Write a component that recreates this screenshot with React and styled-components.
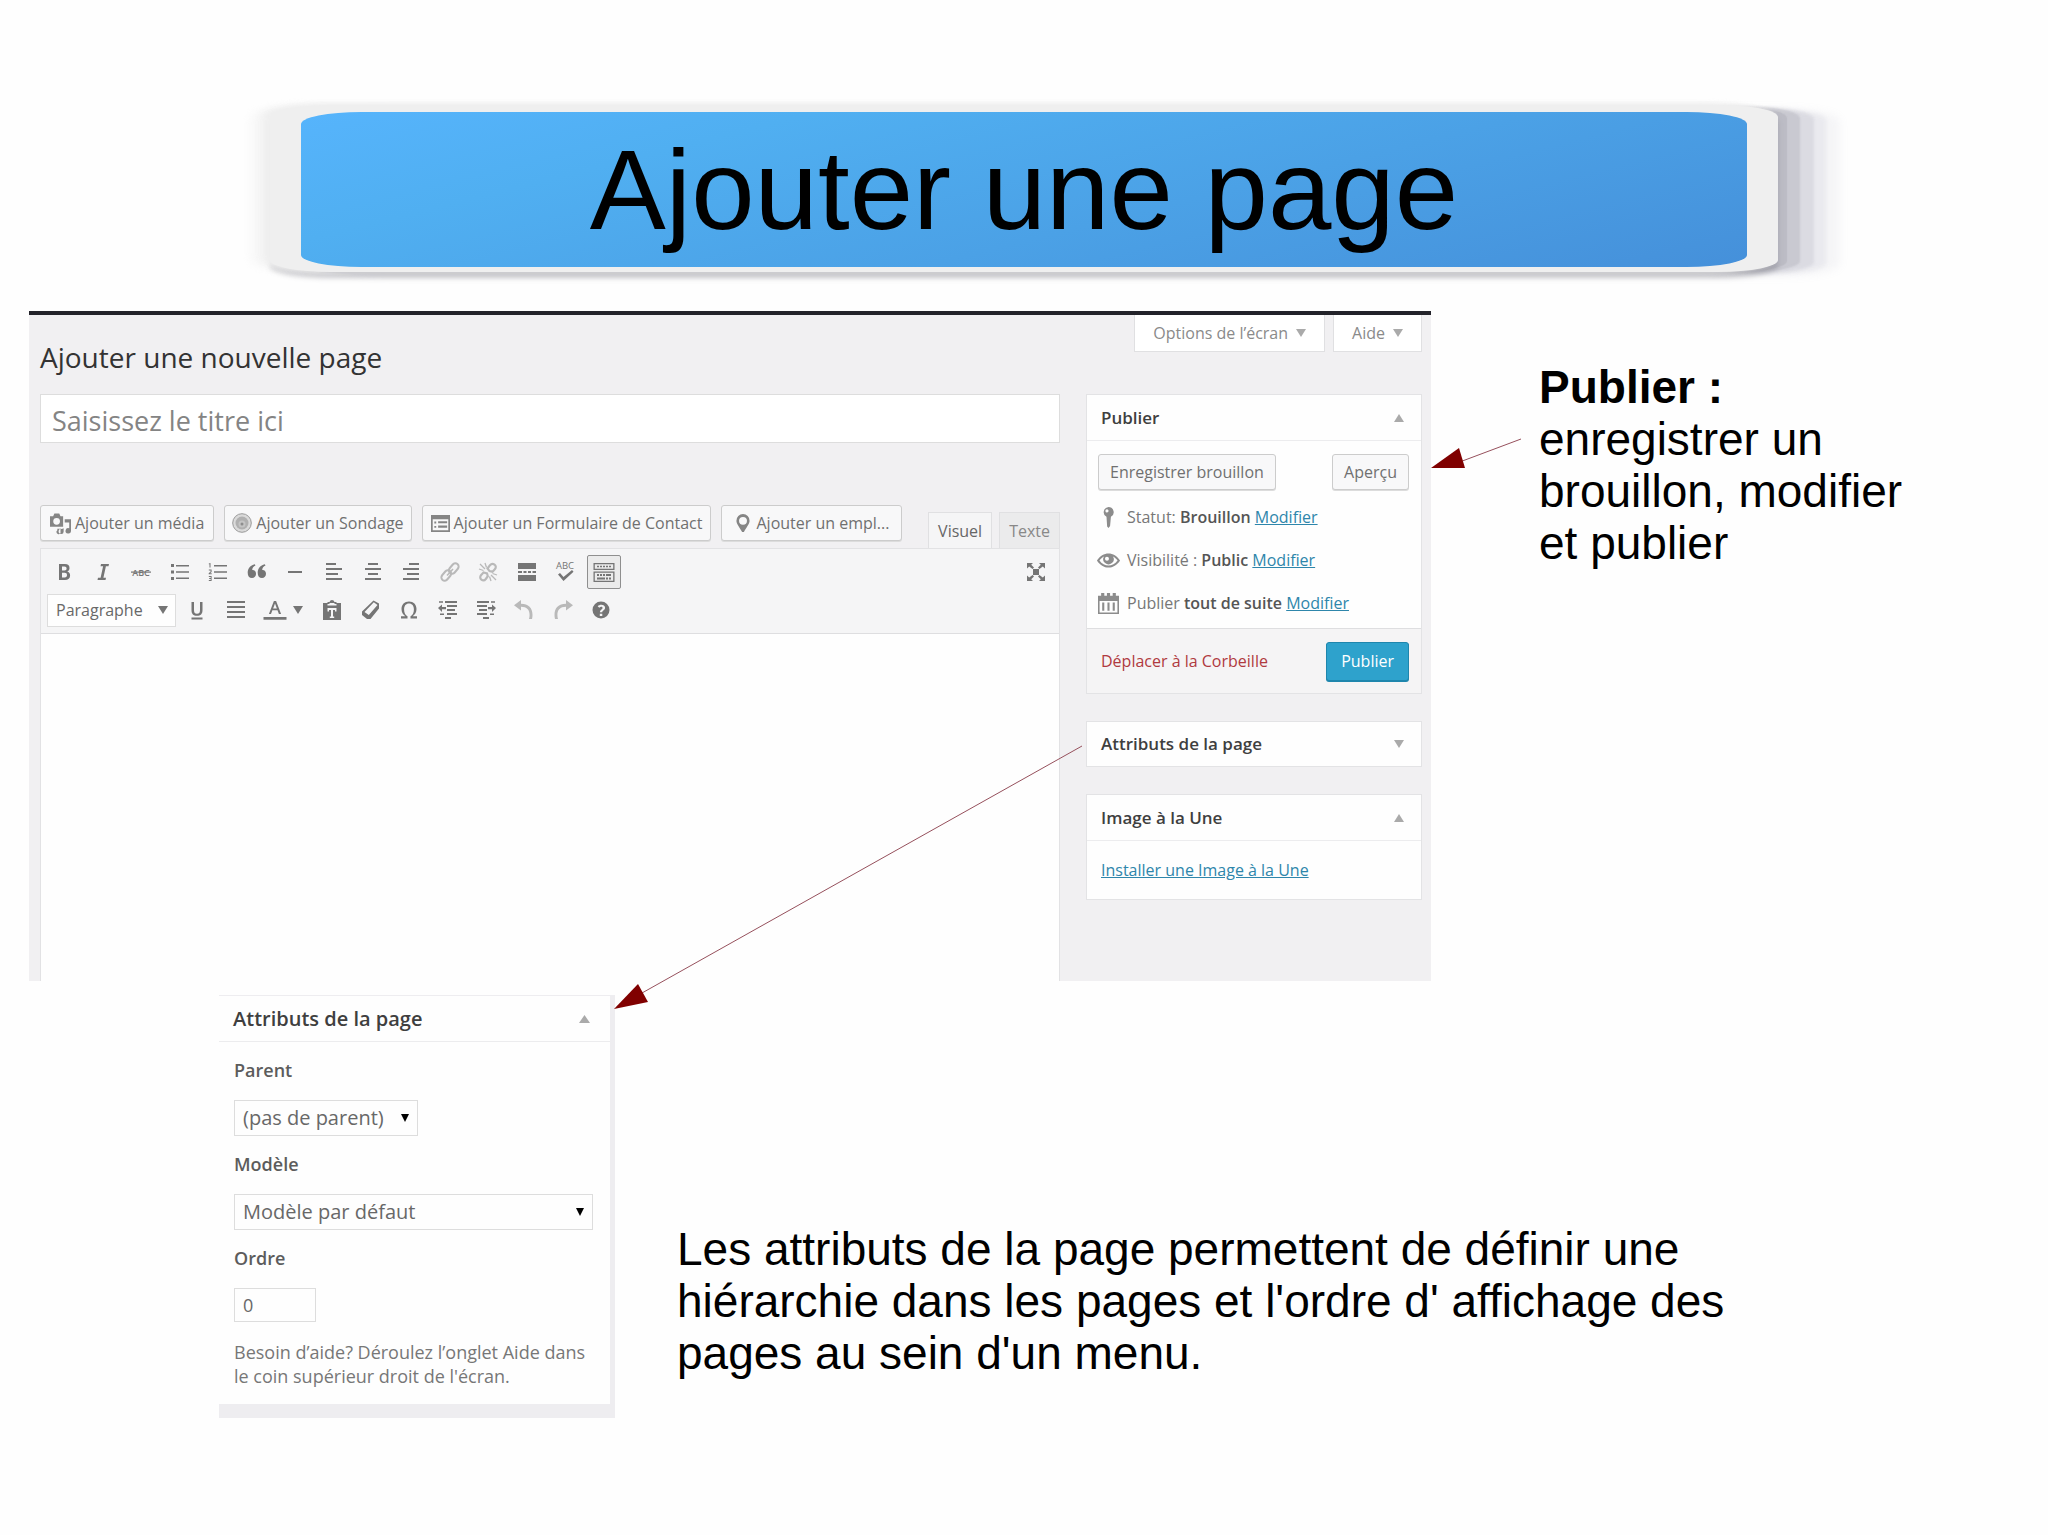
import React from "react";
import styled, { createGlobalStyle, css } from "styled-components";

const Global = createGlobalStyle`
  *, *::before, *::after { box-sizing: border-box; }
  body { margin: 0; background: #fefefe; }
  h1, h2, h3, p { margin: 0; font-weight: 400; }
  button, input, select, textarea { font: inherit; color: inherit; margin: 0; }
`;

const ui = css`
  font-family: "Open Sans", "Noto Sans", sans-serif;
  font-size: 16px;
  line-height: 24px;
  color: #777;
`;

/* ---------- slide ---------- */

const Slide = styled.main`
  position: relative;
  padding: 105px 0 116px;
  font-family: "Liberation Sans", Arial, sans-serif;
  color: #000;
`;

const BannerFrame = styled.header`
  margin: 0 270px;
  padding: 7px 31px 5px;
  background: #efefef;
  border-radius: 60px / 12px;
  box-shadow:
    -4px -1px 4px #efefef,
    -10px -1px 6px rgba(239, 239, 239, 0.6),
    -20px 0 8px rgba(240, 240, 240, 0.4),
    0 6px 5px rgba(140, 140, 148, 0.45),
    9px 1px 1px rgba(160, 160, 168, 0.3),
    22px 1px 2px rgba(160, 160, 168, 0.3),
    36px 2px 3px rgba(170, 170, 180, 0.22),
    48px 3px 4px rgba(170, 170, 190, 0.14),
    62px 4px 8px rgba(170, 170, 190, 0.1);
`;

const Banner = styled.h1`
  height: 155px;
  display: flex;
  align-items: center;
  justify-content: center;
  background: linear-gradient(166deg, #56b4fc 0%, #50aff1 25%, #4ba1e6 60%, #4590da 100%);
  border-radius: 60px / 12px;
  font-size: 114px;
  line-height: 130px;
  white-space: nowrap;
`;

const TopRow = styled.section`
  display: grid;
  grid-template-columns: 1402fr 108fr 509fr;
  margin-top: 39px;
  padding-left: 29px;
`;

const BottomRow = styled.section`
  display: flex;
  align-items: flex-end;
  gap: 62px;
  margin-top: 14px;
  padding-left: 219px;
`;

const Note = styled.p`
  font-size: 46px;
  line-height: 52px;
`;

const SideNote = styled(Note)`
  max-width: 400px;
  padding-top: 50px;
`;

const BottomNote = styled(Note)`
  max-width: 1080px;
  padding-bottom: 39px;
`;

const ShortArrow = styled.svg`
  display: block;
  width: 92px;
  height: 32px;
  margin-top: 126px;
`;

const LongArrow = styled.svg`
  position: absolute;
  left: 612px;
  top: 744px;
  width: 472px;
  height: 268px;
  pointer-events: none;
`;

/* ---------- admin screen ---------- */

const Screen = styled.div`
  ${ui}
  background: #f1f0f2;
  border-top: 4px solid #23232a;
  padding: 0 9px 0 11px;
`;

const ScreenHeader = styled.div`
  display: flex;
  justify-content: space-between;
  align-items: flex-start;
  height: 79px;
`;

const PageTitle = styled.h2`
  padding-top: 23px;
  font-size: 28px;
  line-height: 38px;
  color: #333;
`;

const MetaTabs = styled.div`
  display: flex;
  gap: 8px;
`;

const MetaTab = styled.button`
  ${ui}
  display: flex;
  align-items: center;
  gap: 8px;
  height: 37px;
  padding: 0 18px;
  background: #fff;
  border: 1px solid #e0e0e2;
  border-top: 0;
  color: #8a8a8a;
  svg { color: #aaa; }
`;

const Columns = styled.div`
  display: grid;
  grid-template-columns: 1020fr 336fr;
  column-gap: 26px;
`;

const EditorColumn = styled.div`
  display: flex;
  flex-direction: column;
`;

const TitleInput = styled.input`
  width: 100%;
  height: 49px;
  padding: 3px 11px 0;
  border: 1px solid #ddd;
  background: #fff;
  font-size: 27px;
  color: #777;
  &::placeholder { color: #848484; opacity: 1; }
`;

const EditorTop = styled.div`
  display: flex;
  justify-content: space-between;
  align-items: flex-end;
  margin-top: 62px;
`;

const MediaButtons = styled.div`
  display: flex;
  gap: 10px;
  padding-bottom: 7px;
`;

const Button = styled.button`
  ${ui}
  display: flex;
  align-items: center;
  justify-content: center;
  gap: 4px;
  height: 36px;
  padding: 0 ${(p) => p.$pad || 8}px;
  background: #f8f8f9;
  border: 1px solid #ccc;
  border-radius: 3px;
  box-shadow: 0 1px 0 #dcdcdc;
  color: #707070;
  white-space: nowrap;
  svg { color: #858585; }
`;

const PrimaryButton = styled(Button)`
  height: 39px;
  background: #2ea2cc;
  border-color: #1f86ad;
  box-shadow: 0 1px 0 #1f86ad;
  color: #fff;
`;

const Tabs = styled.div`
  display: flex;
  gap: 7px;
`;

const Tab = styled.button`
  ${ui}
  height: 36px;
  padding: 0 9px;
  margin-bottom: ${(p) => (p.$active ? "-1px" : "0")};
  background: ${(p) => (p.$active ? "#f5f5f6" : "#ebebec")};
  border: 1px solid #e0e0e2;
  border-bottom: 0;
  color: ${(p) => (p.$active ? "#666" : "#888")};
`;

const Editor = styled.div`
  flex: 1;
  display: flex;
  flex-direction: column;
  border: 1px solid #e2e2e4;
  border-bottom: 0;
  background: #fefefe;
`;

const Toolbar = styled.div`
  padding: 6px;
  display: flex;
  flex-direction: column;
  gap: 4px;
  background: #f5f5f6;
  border-bottom: 1px solid #dedee0;
`;

const ToolLine = styled.div`
  display: flex;
  justify-content: space-between;
`;

const ToolRow = styled.div`
  display: flex;
  align-items: center;
  justify-content: space-between;
  height: 34px;
  width: ${(p) => p.$width}px;
`;

const Tool = styled.button`
  display: flex;
  align-items: center;
  justify-content: center;
  gap: 8px;
  width: ${(p) => (p.$wide ? 54 : 34)}px;
  height: 34px;
  padding: 0;
  border: 1px solid ${(p) => (p.$on ? "#8f8f8f" : "transparent")};
  border-radius: 2px;
  background: ${(p) => (p.$on ? "#ebebeb" : "none")};
  color: ${(p) => (p.$dim ? "#b9b9b9" : "#757575")};
`;

const Icon = styled.svg`
  display: block;
  flex: none;
  width: ${(p) => p.$size || 22}px;
  height: ${(p) => p.$size || 22}px;
  fill: currentColor;
`;

const EditorArea = styled.textarea`
  flex: 1;
  width: 100%;
  border: 0;
  resize: none;
  background: #fefefe;
`;

/* ---------- boxes ---------- */

const Sidebar = styled.aside`
  display: flex;
  flex-direction: column;
  gap: 27px;
  padding-bottom: 81px;
`;

const Box = styled.section`
  background: #fefefe;
  border: 1px solid #e3e3e5;
`;

const BoxHead = styled.div`
  display: flex;
  align-items: center;
  justify-content: space-between;
  height: ${(p) => (p.$open ? 46 : 44)}px;
  padding: 0 ${(p) => p.$inset || 17}px 0 14px;
  border-bottom: ${(p) => (p.$open ? "1px solid #ececee" : "0")};
`;

const BoxTitle = styled.h3`
  font-size: ${(p) => p.$size || 17}px;
  font-weight: 600;
  color: #3f3f3f;
`;

const Toggle = styled.button`
  display: flex;
  padding: 0;
  border: 0;
  background: none;
  color: #aaa;
`;

const PublishBody = styled.div`
  padding: 13px 12px 13px 11px;
`;

const Between = styled.div`
  display: flex;
  justify-content: space-between;
  align-items: center;
`;

const InfoList = styled.ul`
  display: grid;
  gap: 19px;
  margin: 15px 0 0;
  padding: 0;
  list-style: none;
`;

const InfoItem = styled.li`
  display: flex;
  align-items: center;
  gap: 8px;
  color: #777;
  svg { color: #8c8c8c; }
  strong { font-weight: 600; color: #555; }
`;

const Link = styled.a`
  color: ${(p) => (p.$danger ? "#b03a40" : "#2e86ab")};
  text-decoration: ${(p) => (p.$danger ? "none" : "underline")};
`;

const PublishFoot = styled(Between)`
  height: 65px;
  padding: 0 12px 0 14px;
  background: #f5f4f5;
  border-top: 1px solid #dedee0;
`;

const BoxBody = styled.div`
  padding: 17px 14px;
`;

/* ---------- page attributes ---------- */

const AttrPanel = styled.form`
  ${ui}
  flex: none;
  width: 396px;
  padding: 1px 5px 14px 0;
  background: #eeedf0;
`;

const AttrInner = styled.div`
  background: #fefefe;
`;

const AttrBody = styled.div`
  display: flex;
  flex-direction: column;
  align-items: flex-start;
  padding: 16px 17px 16px 15px;
`;

const Label = styled.label`
  font-size: 18px;
  font-weight: 600;
  color: #5c5c5c;
  margin-bottom: 18px;
`;

const SelectWrap = styled.div`
  position: relative;
  width: ${(p) => p.$width};
  height: ${(p) => p.$height || 36}px;
  margin-bottom: ${(p) => p.$after || 0}px;
  color: ${(p) => p.$arrow || "#000"};
  svg {
    position: absolute;
    right: ${(p) => p.$inset || 9}px;
    top: 50%;
    margin-top: -4px;
    pointer-events: none;
  }
`;

const Select = styled.select`
  appearance: none;
  width: 100%;
  height: 100%;
  padding: 0 8px;
  border: 1px solid #ddd;
  border-radius: 0;
  background: #fefefe;
  font-size: ${(p) => p.$size}px;
  color: #686868;
`;

const OrderInput = styled.input`
  width: 82px;
  height: 34px;
  padding: 0 8px;
  border: 1px solid #ddd;
  background: #fefefe;
  font-size: 18px;
  color: #686868;
`;

const Help = styled.p`
  margin-top: 18px;
  font-size: 18px;
  line-height: 24px;
  color: #777;
  white-space: nowrap;
`;

/* ---------- drawings ---------- */

const Triangle = ({ up, w = 10, h = 8 }) => (
  <svg width={w} height={h} viewBox="0 0 10 8" preserveAspectRatio="none" fill="currentColor" aria-hidden="true">
    <path d={up ? "M0 8 5 0l5 8z" : "M0 0h10L5 8z"} />
  </svg>
);

const lines = (rows) => rows.map(([x, y, w], i) => <rect key={i} x={x} y={y} width={w} height="2" />);

const GLYPHS = {
  bold: <path fillRule="evenodd" d="M5 2h6c3 0 4.500 1.500 4.500 4 0 1.800-.8 3-2.300 3.600 1.900.5 2.900 1.900 2.900 3.900 0 2.900-1.900 4.500-5.200 4.500H5zm3 2.500v4h2.500c1.400 0 2.100-.7 2.100-2s-.7-2-2.200-2zm0 6.300v4.700h2.700c1.600 0 2.300-.8 2.300-2.400s-.8-2.300-2.400-2.300z" />,
  italic: <path d="M8 2h8l-.5 2.200h-2.600l-2.500 11.600H13l-.5 2.200h-8l.5-2.200h2.600l2.500-11.600H7.500z" />,
  strike: (
    <>
      <text x="10" y="13.500" fontSize="9" fontFamily="Open Sans" fontWeight="600" textAnchor="middle">ABC</text>
      <rect x="0" y="9.500" width="20" height="1.200" />
    </>
  ),
  ul: (
    <>
      <rect x="1" y="2" width="3" height="3" /><rect x="1" y="8.500" width="3" height="3" /><rect x="1" y="15" width="3" height="3" />
      <path d="M6 3h13v1.400H6zM6 9.300h13v1.400H6zM6 15.600h13V17H6z" />
    </>
  ),
  ol: (
    <>
      <path d="M2.500 1v4.500h-1V2.200H.8V1.400zM.8 7.500h2.800V10L2 11.300h1.700v1H.7v-1.100L2.600 9.600V8.400H.8zM.8 14h2.800v5H.8v-.9h1.900v-1.200H1.200v-.8h1.500v-1.200H.8z" />
      <path d="M6 3h13v1.400H6zM6 9.300h13v1.400H6zM6 15.600h13V17H6z" />
    </>
  ),
  quote: <path d="M8.500 3.500C6.400 4.300 5.300 5.900 5.200 8c2-.3 3.800 1.200 3.800 3.800 0 2.400-1.600 4.200-4 4.200-2.700 0-4.300-2-4.300-5.300C.7 6.500 3.300 3.400 7.800 2.300zM18.500 3.500c-2.100.8-3.200 2.400-3.300 4.500 2-.3 3.800 1.200 3.800 3.800 0 2.400-1.600 4.200-4 4.200-2.700 0-4.300-2-4.300-5.300 0-4.200 2.600-7.300 7.100-8.400z" />,
  hr: <rect x="3" y="9" width="14" height="2" />,
  left: lines([[2, 1, 10], [2, 6, 16], [2, 11, 12], [2, 16, 16]]),
  center: lines([[5, 1, 10], [2, 6, 16], [5, 11, 10], [2, 16, 16]]),
  right: lines([[8, 1, 10], [2, 6, 16], [6, 11, 12], [2, 16, 16]]),
  justify: lines([[1, 1, 18], [1, 6, 18], [1, 11, 18], [1, 16, 18]]),
  link: (
    <g fill="none" stroke="currentColor" strokeWidth="2">
      <rect x="8" y="3.200" width="11.500" height="6.600" rx="3.300" transform="rotate(-50 13.750 6.500)" />
      <rect x=".5" y="10.200" width="11.500" height="6.600" rx="3.300" transform="rotate(-50 6.250 13.500)" />
      <path d="M7 13.500 13 7" strokeWidth="1.500" />
    </g>
  ),
  unlink: (
    <g fill="none" stroke="currentColor" strokeWidth="2.200">
      <path d="M9.500 6.500 12 3.200c1.200-1.500 3-1.700 4.500-.6s1.700 3 .5 4.500l-2.500 2.600-3-.6zM5.500 10.500 3 13.200c-1.200 1.500-1 3.300.4 4.400s3.200.9 4.400-.6l2-2.800-.8-2.700z" />
      <path d="M2 2l5 5M7 1l1.500 4.500M1 7l4.500 1.500M18 18l-5-5M13 19l-1.500-4.500M19 13l-4.500-1.500" strokeWidth="1.300" />
    </g>
  ),
  more: <path d="M1 1h18v6H1zM1 9h4v2H1zM6.500 9h3v2h-3zM11 9h3v2h-3zM15.500 9H19v2h-3.500zM1 13h18v6H1z" />,
  spell: (
    <>
      <text x="10" y="7" fontSize="9.500" fontFamily="Open Sans" textAnchor="middle">ABC</text>
      <path d="M3 12.500 5 11l3.500 4L17 8l1.500 1.800-10 9.200z" />
    </>
  ),
  keyboard: (
    <>
      <path fillRule="evenodd" d="M-.5 1h21v7h-21zm1.300 1.300v4.400h18.400V2.300zM-.5 9.500h21V20h-21zm1.300 1.300v7.900h18.400v-7.900z" />
      <path d="M3 3.700h2v1.600H3zM6 3.700h2v1.600H6zM9 3.700h2v1.600H9zM12 3.700h2v1.600h-2zM15 3.700h2v1.600h-2zM3 12h2v2H3zM6 12h2v2H6zM9 12h2v2H9zM12 12h5v2h-5zM3 15.500h8v2H3zM12 15.500h2v2h-2zM15 15.500h2v2h-2z" />
    </>
  ),
  full: <path d="M7 7h6v6H7zM1 1h6L5.200 2.800 8 5.600 6.600 7 3.200 4.400 1 6.500zM19 1v5.500l-2.200-2.100L13.400 7 12 5.600l2.800-2.800L13 1zM1 19v-5.500l2.200 2.100L6.600 13 8 14.400l-2.800 2.800L7 19zM19 19h-6l1.800-1.800-2.800-2.800 1.400-1.400 3.400 2.600 2.200-2.100z" />,
  underline: <path d="M4.500 2H7v8.200c0 2.400.9 3.600 3 3.600s3-1.200 3-3.600V2h2.500v8.300c0 3.700-1.900 5.500-5.500 5.500s-5.500-1.800-5.500-5.500zM4.500 17.500h11v2h-11z" />,
  color: <path fillRule="evenodd" d="M8.900 1h2.200l5 13h-2.200l-1.400-3.800H7.400L6 14H3.900zm1.100 2.500L8.100 8.500h3.800zM-1.500 17h23v2.800h-23z" />,
  paste: <path fillRule="evenodd" d="M1 3h4.500V2H7.500a2.600 2.600 0 0 1 5 0h2v1H19v17H1zm4.500 1v1.500h9V4h-2V3h-5v1zM5.500 8v3.500H7V10h2v6.500H7.800V18h4.400v-1.500H11V10h2v1.500h1.500V8z" />,
  eraser: <path fillRule="evenodd" d="M12.500.5 18 3.500v5L9.500 19H6l-5-4v-3.500zm.3 1.800L3.500 12l4.300 3 8.700-10z" />,
  omega: <path d="M2 16.200h4.300C3.900 14.600 2.500 12.200 2.500 9c0-4.500 3-7.500 7.500-7.500s7.500 3 7.500 7.500c0 3.200-1.400 5.600-3.800 7.200H18v2.300h-6.500v-2.300c2.200-1.100 3.400-3.500 3.400-6.800 0-3.600-1.800-5.800-4.900-5.800S5.100 5.800 5.100 9.400c0 3.300 1.200 5.700 3.400 6.800v2.300H2z" />,
  outdent: <path d="M7 1h12v2H7zM9 5h10v2H9zM9 9h8v2H9zM9 13h10v2H9zM7 17h6v2H7zM0 8l4-3.500V7h4v2.200H4V12zM1 1.300h4v1.500H1zM2 13.500h4V15H2z" />,
  indent: <path d="M1 1h12v2H1zM1 5h10v2H1zM3 9h8v2H3zM1 13h10v2H1zM7 17h6v2H7zM20 8l-4-3.500V7h-4v2.200h4V12zM15 1.300h4v1.500h-4zM14 13.500h4V15h-4z" />,
  undo: <path d="M7 0v3.800c7.500 0 11.500 4 11.500 11.200 0 1.500-.2 2.800-.5 4h-3c.4-1.300.6-2.600.6-4 0-5.400-2.800-8.200-8.600-8.300v3.800L0 5.200z" />,
  redo: <path d="M13 0v3.800C5.500 3.800 1.500 7.800 1.500 15c0 1.500.2 2.800.5 4h3c-.4-1.300-.6-2.600-.6-4 0-5.400 2.800-8.200 8.600-8.300v3.800l7-5.300z" />,
  help: <path fillRule="evenodd" d="M10 1.500a8.500 8.500 0 1 1 0 17 8.500 8.500 0 0 1 0-17zM6.700 6.200l1.600 1.500c1.500-1.500 3.300-.9 3.300.3 0 1.300-2.700 1.700-2.700 4.300h2.300c0-1.700 2.900-1.900 2.900-4.500 0-3.300-5-4.300-7.400-1.600zM8.800 13.700V16h2.500v-2.300z" />,
  media: <path fillRule="evenodd" d="M0 3h3l1.200-2.500h4.600L10 3h2.500v10H0zm6.300 1.700a3.200 3.200 0 1 0 0 6.400 3.200 3.200 0 0 0 0-6.400zM14 6h6v11a2.600 2.600 0 1 1-1.700-2.500V9H14zM13 14.500v3a2.400 2.400 0 1 1-1.700-2.300zM7 15h3v2.500a2 2 0 1 1-3-1z" />,
  form: <path fillRule="evenodd" d="M0 1h20v18H0zm1.800 4.500v11.700h16.400V5.500zM3.500 8h2v2h-2zM7.500 7.500H17v2.300H7.500zM7.500 12H17v2.500H7.500zM3.500 12.500h2v2h-2z" />,
  pin: <path fillRule="evenodd" d="M10 0a7.300 7.300 0 0 1 7.300 7.500c0 4-3.500 7-6.300 12.500H9C6.200 14.500 2.700 11.500 2.700 7.500A7.300 7.300 0 0 1 10 0zm0 3.200a4.400 4.400 0 1 0 0 8.800 4.400 4.400 0 0 0 0-8.800z" />,
  key: <path fillRule="evenodd" d="M10 0a5 5 0 0 1 2.300 9.400L11.500 18 10 20l-1.300-1.500-.6-9.100A5 5 0 0 1 10 0zM8.500 2.200a1.500 1.500 0 1 0 .1 3 1.500 1.500 0 0 0-.1-3z" />,
  eye: <path fillRule="evenodd" d="M-1 10C4.500 1 15.500 1 21 10 15.500 19 4.500 19-1 10zm2.400 0c4.300 6.300 12.900 6.300 17.200 0-1.200-1.800-2.700-3-4.300-3.900a5 5 0 1 1-8.600 0C4.100 7 2.600 8.200 1.400 10zM8.500 6.500a1.900 1.900 0 1 0 .1 3.800 1.900 1.900 0 0 0-.1-3.800z" />,
  calendar: <path fillRule="evenodd" d="M0 2.500h3V0h3v2.500h2.500V0h3v2.500H14V0h3v2.500h3V20H0zm1.500 5v11h17v-11zM4 9h2v8H4zM9 9h2v8H9zM14 9h2v8h-2z" />,
};

const Glyph = ({ name, size = 20 }) => (
  <Icon $size={size} viewBox="0 0 20 20" overflow="visible" aria-hidden="true">{GLYPHS[name]}</Icon>
);

const PollIcon = () => (
  <Icon $size={20} viewBox="0 0 20 20" aria-hidden="true">
    <circle cx="10" cy="10" r="9.300" fill="#dadada" stroke="#9a9a9a" strokeWidth="1" />
    <circle cx="10" cy="10" r="6.500" fill="#b0b0b0" />
    <circle cx="10" cy="11" r="3.500" fill="#c4c4c4" />
    <circle cx="10" cy="11" r="1.500" fill="#8d8d8d" />
  </Icon>
);

const ROW_ONE = [
  ["bold", "Gras"], ["italic", "Italique"], ["strike", "Barré"], ["ul", "Liste à puces"],
  ["ol", "Liste numérotée"], ["quote", "Citation"], ["hr", "Ligne horizontale"],
  ["left", "Aligner à gauche"], ["center", "Centrer"], ["right", "Aligner à droite"],
  ["link", "Insérer un lien", true], ["unlink", "Retirer le lien", true], ["more", "Lire la suite"],
  ["spell", "Orthographe"], ["keyboard", "Outils", false, true],
];

const ROW_TWO = [
  ["paste", "Coller en texte"], ["eraser", "Effacer la mise en forme"], ["omega", "Caractères spéciaux"],
  ["outdent", "Diminuer le retrait"], ["indent", "Augmenter le retrait"], ["undo", "Annuler", true],
  ["redo", "Rétablir", true], ["help", "Aide"],
];

const tool = ([name, label, dim, on]) => (
  <Tool key={name} type="button" aria-label={label} $dim={dim} $on={on}>
    <Glyph name={name} />
  </Tool>
);

const Head = ({ title, open = true }) => (
  <BoxHead $open={open}>
    <BoxTitle>{title}</BoxTitle>
    <Toggle type="button" aria-label={`Afficher ou masquer ${title}`}><Triangle up={open} /></Toggle>
  </BoxHead>
);

export default function App() {
  return (
    <>
      <Global />
      <Slide>
        <BannerFrame><Banner>Ajouter une page</Banner></BannerFrame>

        <TopRow>
          <Screen>
            <ScreenHeader>
              <PageTitle>Ajouter une nouvelle page</PageTitle>
              <MetaTabs>
                <MetaTab type="button">Options de l’écran <Triangle /></MetaTab>
                <MetaTab type="button">Aide <Triangle /></MetaTab>
              </MetaTabs>
            </ScreenHeader>
            <Columns>
              <EditorColumn>
                <TitleInput aria-label="Titre" placeholder="Saisissez le titre ici" />
                <EditorTop>
                  <MediaButtons>
                    <Button type="button" $pad={9}><Glyph name="media" size={21} />Ajouter un média</Button>
                    <Button type="button" $pad={7}><PollIcon />Ajouter un Sondage</Button>
                    <Button type="button" $pad={8}><Glyph name="form" size={19} />Ajouter un Formulaire de Contact</Button>
                    <Button type="button" $pad={12}><Glyph name="pin" size={18} />Ajouter un empl...</Button>
                  </MediaButtons>
                  <Tabs>
                    <Tab type="button" $active>Visuel</Tab>
                    <Tab type="button">Texte</Tab>
                  </Tabs>
                </EditorTop>
                <Editor>
                  <Toolbar>
                    <ToolLine>
                      <ToolRow $width={574}>{ROW_ONE.map(tool)}</ToolRow>
                      {tool(["full", "Plein écran"])}
                    </ToolLine>
                    <ToolRow $width={571}>
                      <SelectWrap $width="129px" $height={33} $arrow="#757575" $inset={8}>
                        <Select aria-label="Format" $size={16}><option>Paragraphe</option></Select>
                        <Triangle />
                      </SelectWrap>
                      {tool(["underline", "Souligné"])}
                      {tool(["justify", "Justifier"])}
                      <Tool type="button" aria-label="Couleur du texte" $wide>
                        <Glyph name="color" /><Triangle />
                      </Tool>
                      {ROW_TWO.map(tool)}
                    </ToolRow>
                  </Toolbar>
                  <EditorArea aria-label="Contenu" />
                </Editor>
              </EditorColumn>

              <Sidebar>
                <Box>
                  <Head title="Publier" />
                  <PublishBody>
                    <Between>
                      <Button type="button" $pad={11}>Enregistrer brouillon</Button>
                      <Button type="button" $pad={11}>Aperçu</Button>
                    </Between>
                    <InfoList>
                      <InfoItem><Glyph name="key" size={21} /><span>Statut: <strong>Brouillon</strong> <Link href="#statut">Modifier</Link></span></InfoItem>
                      <InfoItem><Glyph name="eye" size={21} /><span>Visibilité : <strong>Public</strong> <Link href="#visibilite">Modifier</Link></span></InfoItem>
                      <InfoItem><Glyph name="calendar" size={21} /><span>Publier <strong>tout de suite</strong> <Link href="#date">Modifier</Link></span></InfoItem>
                    </InfoList>
                  </PublishBody>
                  <PublishFoot>
                    <Link href="#corbeille" $danger>Déplacer à la Corbeille</Link>
                    <PrimaryButton type="button" $pad={14}>Publier</PrimaryButton>
                  </PublishFoot>
                </Box>
                <Box><Head title="Attributs de la page" open={false} /></Box>
                <Box>
                  <Head title="Image à la Une" />
                  <BoxBody><Link href="#image">Installer une Image à la Une</Link></BoxBody>
                </Box>
              </Sidebar>
            </Columns>
          </Screen>

          <ShortArrow viewBox="0 0 92 32" aria-hidden="true">
            <path d="M26 26 90 2" stroke="#96505c" strokeWidth="1" />
            <path d="M0 31 28 11l6 20z" fill="#800000" />
          </ShortArrow>
          <SideNote><strong>Publier :</strong><br />enregistrer un brouillon, modifier et publier</SideNote>
        </TopRow>

        <BottomRow>
          <AttrPanel>
            <AttrInner>
              <BoxHead $open $inset={20}>
                <BoxTitle $size={20}>Attributs de la page</BoxTitle>
                <Toggle type="button" aria-label="Masquer les attributs"><Triangle up w={11} h={8} /></Toggle>
              </BoxHead>
              <AttrBody>
                <Label htmlFor="parent">Parent</Label>
                <SelectWrap $width="184px" $after={16}>
                  <Select id="parent" $size={20}><option>(pas de parent)</option></Select>
                  <Triangle w={8} h={8} />
                </SelectWrap>
                <Label htmlFor="modele">Modèle</Label>
                <SelectWrap $width="100%" $after={16}>
                  <Select id="modele" $size={20}><option>Modèle par défaut</option></Select>
                  <Triangle w={8} h={8} />
                </SelectWrap>
                <Label htmlFor="ordre">Ordre</Label>
                <OrderInput id="ordre" defaultValue="0" />
                <Help>Besoin d’aide? Déroulez l’onglet Aide dans<br />le coin supérieur droit de l'écran.</Help>
              </AttrBody>
            </AttrInner>
          </AttrPanel>
          <BottomNote>Les attributs de la page permettent de définir une hiérarchie dans les pages et l'ordre d' affichage des pages au sein d'un menu.</BottomNote>
        </BottomRow>

        <LongArrow viewBox="0 0 472 268" aria-hidden="true">
          <path d="M30 249 470 2" stroke="#96505c" strokeWidth="1" />
          <path d="M2 265 26 240l10 18z" fill="#800000" />
        </LongArrow>
      </Slide>
    </>
  );
}
